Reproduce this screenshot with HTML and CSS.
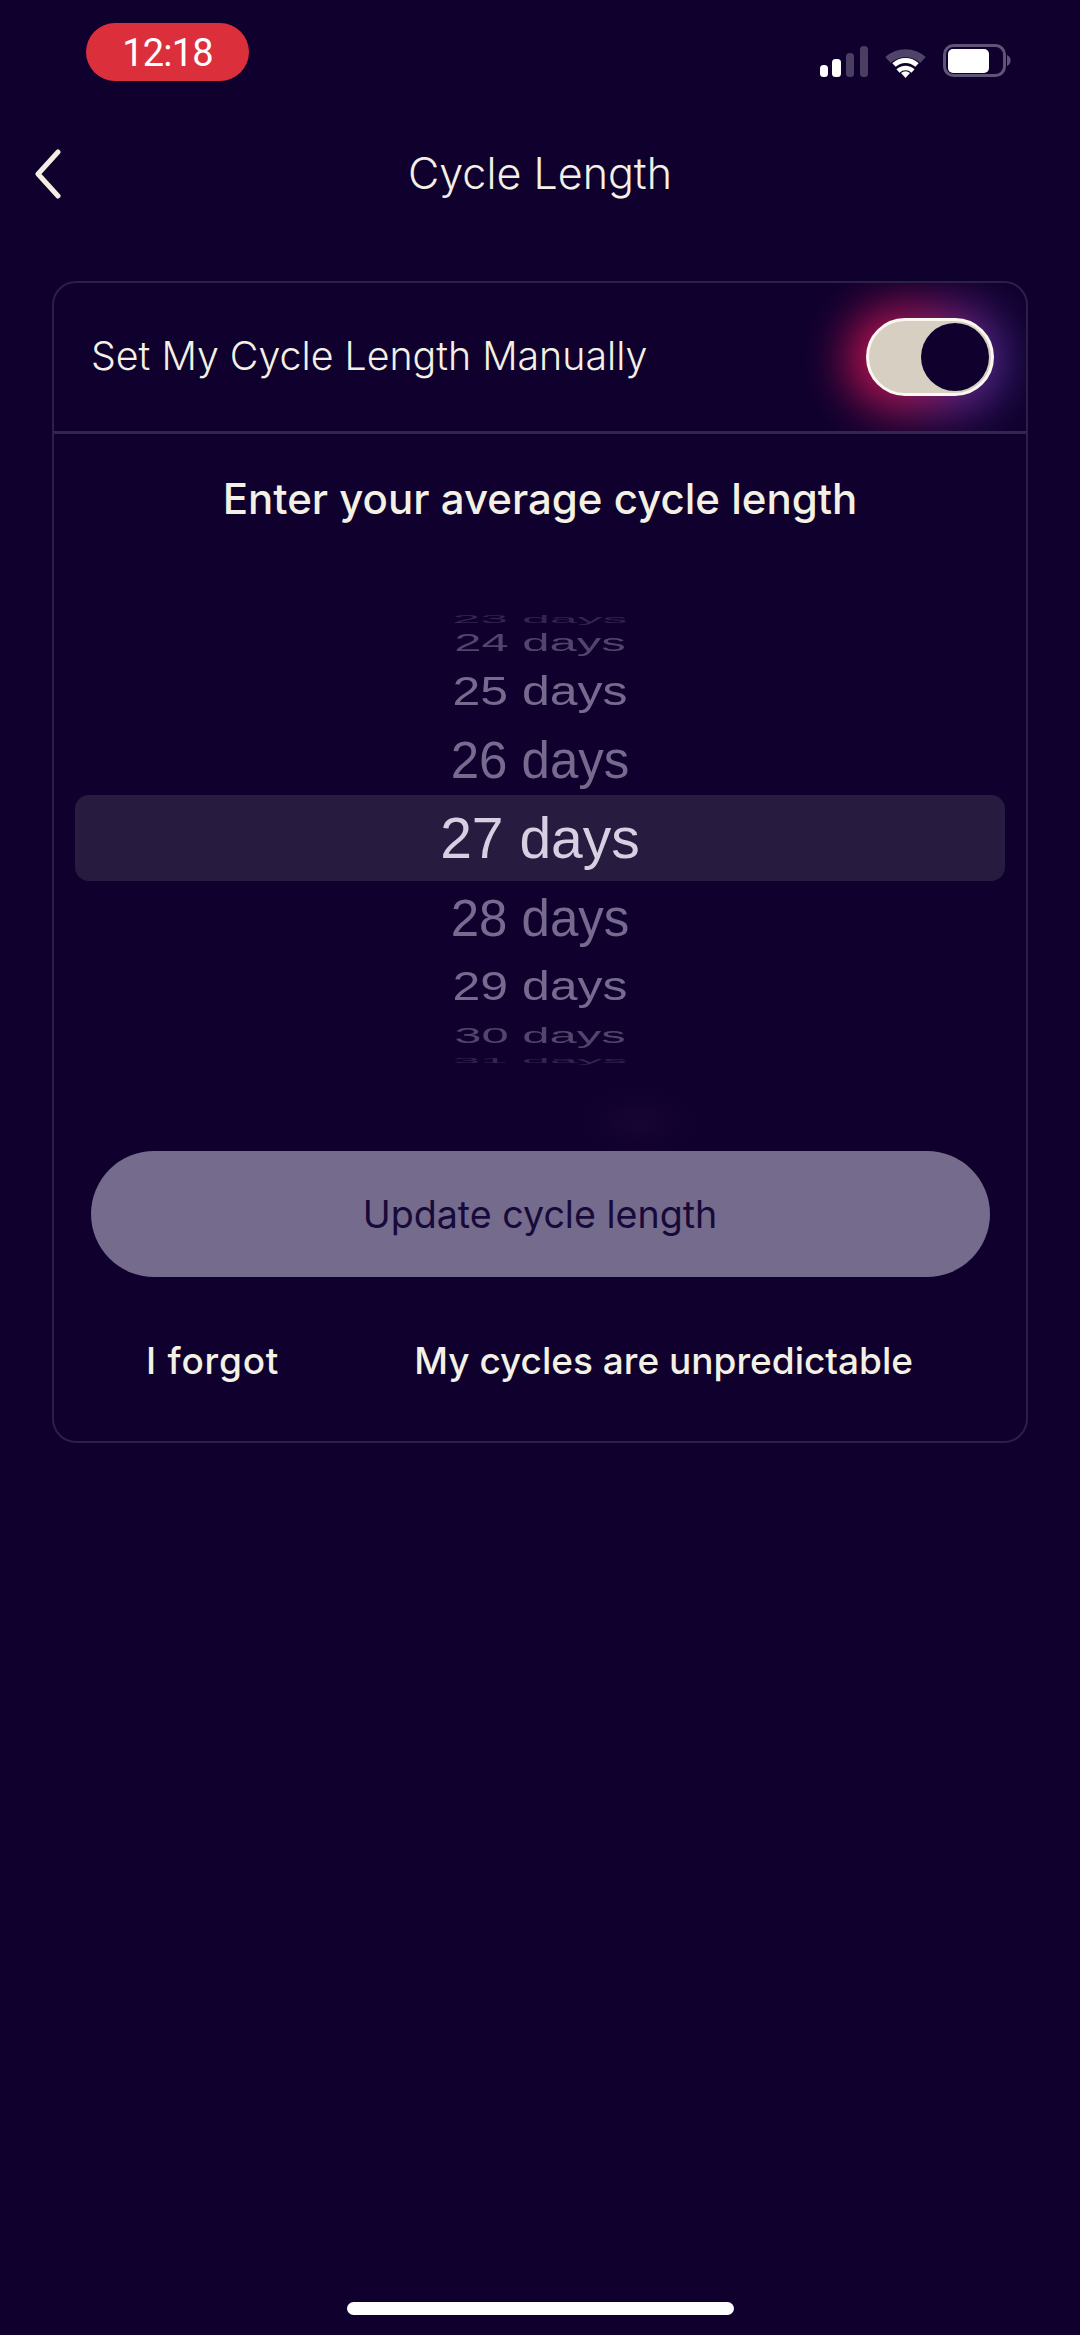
FILE: index.html
```html
<!DOCTYPE html>
<html>
<head>
    <title>Cycle Length</title>
    <link rel="stylesheet" href="styles.css">
</head>

<body>
    <div class="page">
        <!-- Status bar -->
        <div class="status-bar">
            <div class="time-pill">12:18</div>
            <svg class="status-icons" width="192" height="34" viewBox="820 44 192 34">
                <!-- signal -->
                <rect x="820" y="65" width="8" height="12" rx="3.5" fill="#fff"/>
                <rect x="832" y="59" width="9" height="18" rx="3.5" fill="#fff"/>
                <rect x="846" y="53" width="8" height="24" rx="3.5" fill="#4a3f63"/>
                <rect x="860" y="46" width="8" height="31" rx="3.5" fill="#4a3f63"/>
                <!-- wifi -->
                <path d="M888 60 A26 26 0 0 1 923 60" fill="none" stroke="#4f4468" stroke-width="8"/>
                <path d="M894 65 A17 17 0 0 1 917 65" fill="none" stroke="#fff" stroke-width="5"/>
                <path d="M898 71 A11 11 0 0 1 913 71" fill="none" stroke="#fff" stroke-width="4.5"/>
                <path d="M905.5 78 L901 73 A7 7 0 0 1 910 73 Z" fill="#fff"/>
                <!-- battery -->
                <rect x="944.5" y="45.5" width="60" height="30" rx="9" fill="none" stroke="#5f5478" stroke-width="3"/>
                <rect x="948" y="49" width="41" height="24" rx="5" fill="#fff"/>
                <path d="M1007 55 A6 6 0 0 1 1007 66 Z" fill="#5f5478"/>
            </svg>
        </div>

        <!-- Top navigation -->
        <div class="nav">
            <svg class="back" width="30" height="50" viewBox="0 0 30 50">
                <path d="M25 3 L5 25 L25 47" fill="none" stroke="#f1efe2" stroke-width="5" stroke-linecap="round" stroke-linejoin="round"/>
            </svg>
            <h1 class="title">Cycle Length</h1>
        </div>

        <!-- Main card -->
        <div class="card">
            <div class="card-head">
                <span class="head-label">Set My Cycle Length Manually</span>
                <div class="toggle"><div class="knob"></div></div>
            </div>

            <div class="card-body">
                <h2 class="prompt">Enter your average cycle length</h2>

                <div class="picker">
                    <div class="row row-23"><span>23 days</span></div>
                    <div class="row row-24"><span>24 days</span></div>
                    <div class="row row-25"><span>25 days</span></div>
                    <div class="row row-26"><span>26 days</span></div>
                    <div class="row row-27"><span>27 days</span></div>
                    <div class="row row-28"><span>28 days</span></div>
                    <div class="row row-29"><span>29 days</span></div>
                    <div class="row row-30"><span>30 days</span></div>
                    <div class="row row-31"><span>31 days</span></div>
                </div>

                <div class="smudge"></div>

                <button class="update-btn">Update cycle length</button>

                <div class="links">
                    <a class="link">I forgot</a>
                    <a class="link">My cycles are unpredictable</a>
                </div>
            </div>
        </div>

        <div class="home-bar"></div>
    </div>
</body>
</html>
```

FILE: styles.css
```css
body {
    margin: 0;
    background-color: #0f002e;
    font-family: Inter, "Liberation Sans", sans-serif;
    color: #f3f0e4;
}

.page {
    width: 1080px;
    height: 2335px;
    display: flex;
    flex-direction: column;
    overflow: hidden;
}

/* Status bar */
.status-bar {
    height: 100px;
    display: flex;
    justify-content: space-between;
    padding: 23px 68px 0 86px;
    box-sizing: border-box;
}

.time-pill {
    width: 163px;
    height: 58px;
    border-radius: 29px;
    background-color: #dc2f3c;
    color: #fff;
    font-family: Roboto, sans-serif;
    font-size: 38px;
    line-height: 60px;
    letter-spacing: -0.8px;
    text-align: center;
}

.status-icons {
    margin-top: 21px;
}

/* Navigation */
.nav {
    height: 110px;
    position: relative;
    display: flex;
    align-items: center;
    justify-content: center;
    margin-top: 20px;
}

.back {
    position: absolute;
    left: 33px;
    top: 29px;
}

.title {
    margin: 0;
    font-size: 43px;
    font-weight: 300;
    position: relative;
    top: -2px;
}

/* Card */
.card {
    margin: 51px 52px 0;
    height: 1162px;
    box-sizing: border-box;
    border: 2px solid #2c1f48;
    border-radius: 24px;
}

.card-head {
    height: 148px;
    display: flex;
    align-items: center;
    justify-content: space-between;
    padding: 0 32px 0 37px;
    border-bottom: 3px solid #32254e;
    overflow: hidden;
    position: relative;
    z-index: 0;
    border-radius: 22px 22px 0 0;
}

.head-label {
    font-size: 39.3px;
    font-weight: 300;
    position: relative;
    top: -2px;
}

.toggle {
    width: 128px;
    height: 78px;
    box-sizing: border-box;
    position: relative;
    border: 3px solid #fbf8f2;
    border-radius: 39px;
    background-color: #d8cfc3;
    display: flex;
    align-items: center;
    justify-content: flex-end;
    padding-right: 2px;
}

/* coloured glow behind the switch */
.toggle::before {
    content: "";
    position: absolute;
    inset: -14px -14px -18px -20px;
    z-index: -1;
    border-radius: 60px;
    background: linear-gradient(100deg, #e00f4c 0%, #a81a58 42%, #622a94 76%, #38308c 100%);
    filter: blur(24px);
}

.knob {
    width: 68px;
    height: 68px;
    border-radius: 50%;
    background-color: #0f002e;
}

.card-body {
    padding: 0 21px;
    display: flex;
    flex-direction: column;
    align-items: center;
    position: relative;
}

.prompt {
    margin: 40px 0 0;
    height: 50px;
    font-size: 42px;
    font-weight: 500;
    line-height: 50px;
}

/* Number wheel */
.picker {
    width: 100%;
    margin-top: 86px;
    font-family: "Liberation Sans", sans-serif;
    color: #766b8e;
    text-align: center;
}

.row {
    display: flex;
    align-items: center;
    justify-content: center;
    overflow: hidden;
}

.row span {
    display: block;
    font-size: 50px;
    line-height: 60px;
    flex-shrink: 0;
}

.row-23 { height: 20px; opacity: 0.35; }
.row-23 span { transform: scaleY(0.2); }
.row-24 { height: 26px; opacity: 0.65; }
.row-24 span { transform: scaleY(0.48); font-size: 49px; }
.row-25 { height: 70px; }
.row-25 span { transform: scaleY(0.8); }
.row-26 { height: 69px; }
.row-26 span { font-size: 51px; }
.row-27 {
    height: 86px;
    border-radius: 14px;
    background-color: #271c3f;
    color: #d6d0e2;
}
.row-27 span { font-size: 57px; }
.row-28 { height: 76px; }
.row-28 span { font-size: 51px; }
.row-29 { height: 57px; }
.row-29 span { transform: scaleY(0.8); }
.row-30 { height: 41px; opacity: 0.65; }
.row-30 span { transform: scaleY(0.45); font-size: 49px; }
.row-31 { height: 10px; opacity: 0.35; }
.row-31 span { transform: scaleY(0.15); }

/* faint leftover tint above the button */
.smudge {
    position: absolute;
    left: 520px;
    top: 650px;
    width: 130px;
    height: 75px;
    background: radial-gradient(ellipse at center, #170433 0%, rgba(23, 4, 51, 0) 72%);
}

/* Button and links */
.update-btn {
    width: 899px;
    height: 126px;
    margin-top: 86px;
    border: none;
    border-radius: 63px;
    background-color: #756b8c;
    color: #170a3a;
    font-family: inherit;
    font-size: 37.6px;
    position: relative;
}

.links {
    width: 100%;
    display: flex;
    margin-top: 60px;
    font-size: 37px;
    font-weight: 500;
    line-height: 48px;
}

.link:first-child {
    margin-left: 71px;
    letter-spacing: 0.8px;
}

.link:last-child {
    margin-left: 135px;
}

.home-bar {
    width: 387px;
    height: 13px;
    border-radius: 7px;
    background-color: #fff;
    margin: auto auto 20px;
}
```
